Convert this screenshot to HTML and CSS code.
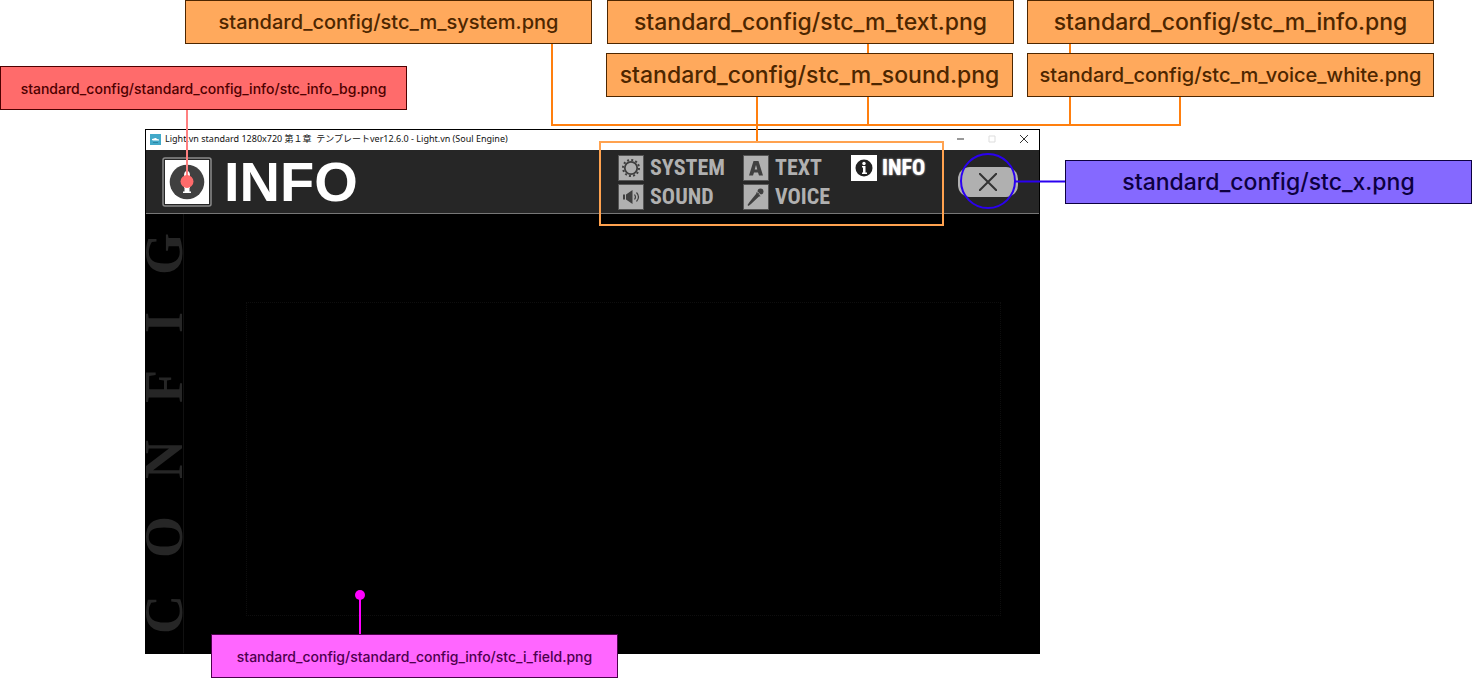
FILE: index.html
```html
<!DOCTYPE html>
<html lang="ja">
<head>
<meta charset="utf-8">
<title>standard_config – INFO</title>
<link rel="stylesheet" href="styles.css">
</head>
<body>
<main class="diagram">
  <section class="window" aria-label="Light.vn">
    <div class="titlebar">
      <svg class="app-icon" viewBox="0 0 11 11" aria-hidden="true"><rect width="11" height="11" fill="#42a9c9"/><path d="M2 6V5l2-.5L5 4h1l1 1 2 .5v1H3z" fill="#fff"/><path d="M3 8.500h5" stroke="#2b86a5"/></svg>
      <span class="caption">Light.vn standard 1280x720 第１章&nbsp; テンプレートver12.6.0 - Light.vn (Soul Engine)</span>
      <div class="controls">
        <button class="control" aria-label="Minimize"><svg viewBox="0 0 8 8"><path d="M1 4h7" stroke="#777" stroke-width="1.5"/></svg></button>
        <button class="control" aria-label="Maximize"><svg viewBox="0 0 8 8"><path d="M1 1h6v6H1z" fill="none" stroke="#ddd"/></svg></button>
        <button class="control" aria-label="Close window"><svg viewBox="0 0 8 8"><path d="m0 0 8 8M8 0 0 8" stroke="#333"/></svg></button>
      </div>
    </div>
    <header class="header">
      <svg class="info-mark" viewBox="0 0 50 50" aria-hidden="true"><rect x="1" y="1" width="48" height="48" rx="2" fill="#262626" stroke="#8a8a8a" stroke-width="1.5"/><rect x="3" y="3" width="44" height="44" fill="#fff"/><circle cx="25" cy="25" r="17.300" fill="#404040"/><path d="M25 14q3 0 3 5v12h-6V19q0-5 3-5z" fill="#fff"/><path d="M22.500 30h5v4.500H29V36h-8v-1.500h1.500z" fill="#fff"/></svg>
      <h1 class="heading">INFO</h1>
      <nav class="menu">
        <button class="item"><svg class="icon" viewBox="0 0 26 26"><rect x=".5" y=".5" width="25" height="25" fill="#b0b0b0" stroke="#555"/><circle cx="13" cy="13" r="6.200" fill="none" stroke="#404040" stroke-width="1.800"/><circle cx="13" cy="13" r="8" fill="none" stroke="#404040" stroke-width="2" stroke-dasharray="2 2.189"/></svg>SYSTEM</button>
        <button class="item"><svg class="icon" viewBox="0 0 26 26"><rect x=".5" y=".5" width="25" height="25" fill="#b0b0b0" stroke="#555"/><path d="M6 20.500 10.500 6h5L20 20.500h-4l-1-3h-4l-1 3zm5.700-6h2.600L13 10z" fill="#404040" fill-rule="evenodd"/></svg>TEXT</button>
        <button class="item current" aria-current="page"><svg class="icon" viewBox="0 0 26 26"><rect width="26" height="26" fill="#fff"/><circle cx="13" cy="13" r="8.500" fill="#222"/><circle cx="13" cy="8.500" r="1.700" fill="#fff"/><path d="M11 11h3.500v6.500H16V19h-5v-1.500h1v-5h-1z" fill="#fff"/></svg>INFO</button>
        <button class="item"><svg class="icon" viewBox="0 0 26 26"><rect x=".5" y=".5" width="25" height="25" fill="#b0b0b0" stroke="#555"/><path d="M5 10.500h2v5H5zm3 0L14.500 6v14L8 15.500z" fill="#404040"/><path d="M16.500 10.500q2 2.500 0 5m2-7q4 4.500 0 9" fill="none" stroke="#404040" stroke-width="1.200"/></svg>SOUND</button>
        <button class="item"><svg class="icon" viewBox="0 0 26 26"><rect x=".5" y=".5" width="25" height="25" fill="#b0b0b0" stroke="#555"/><circle cx="17.500" cy="7.500" r="3" fill="#404040"/><path d="m13.500 8 4.200 4.200-1.700.3L8 20l-2.500 2-1-1L6.500 18l6.700-8.300z" fill="#404040"/><path d="m14.500 7.500 3.500 3.500" stroke="#b0b0b0" stroke-width=".6"/></svg>VOICE</button>
      </nav>
      <button class="close" aria-label="Close"><svg viewBox="0 0 18 18"><path d="m0 0 18 18M18 0 0 18" stroke="#333" stroke-width="2"/></svg></button>
    </header>
    <div class="body">
      <div class="rail"><span>C</span><span>O</span><span>N</span><span>F</span><span>I</span><span>G</span></div>
      <div class="field"></div>
    </div>
  </section>

  <svg class="links" viewBox="0 0 1472 678" aria-hidden="true">
    <g fill="none" stroke="#ff7f0e" stroke-width="2"><path d="M552 43v82h628V96M868 43v82M1070 43v82M757 96v46"/><path d="M600 142h343v83H600z" stroke="#ffa24f"/></g>
    <path d="M187 109v72" stroke="#ff8080" stroke-width="2"/><circle cx="187" cy="181.500" r="6.500" fill="#ff6b6b"/>
    <path d="M360 595v40" stroke="#f0f" stroke-width="2"/><circle cx="360" cy="595" r="5" fill="#f0f"/>
    <g fill="none" stroke="#2a00f0" stroke-width="2"><circle cx="988" cy="181" r="27"/><path d="M1015 181.500h51"/></g>
  </svg>

  <div class="label orange medium system">standard_config/stc_m_system.png</div>
  <div class="label orange text">standard_config/stc_m_text.png</div>
  <div class="label orange info">standard_config/stc_m_info.png</div>
  <div class="label orange sound">standard_config/stc_m_sound.png</div>
  <div class="label orange medium voice">standard_config/stc_m_voice_white.png</div>
  <div class="label red small">standard_config/standard_config_info/stc_info_bg.png</div>
  <div class="label blue">standard_config/stc_x.png</div>
  <div class="label pink small">standard_config/standard_config_info/stc_i_field.png</div>
</main>
</body>
</html>
```
FILE: styles.css
```css
* { box-sizing: border-box; }
body { margin: 0; background: #fff; font-family: Inter, "Noto Sans CJK JP", sans-serif; }
button { margin: 0; padding: 0; border: 0; background: none; font: inherit; color: inherit; }
.diagram { position: relative; min-height: 678px; }

.window { position: absolute; left: 145px; top: 129px; width: 895px; min-height: 525px; display: flex; flex-direction: column; background: #000; border: 1px solid #000; }
.titlebar { display: flex; align-items: center; gap: 4px; height: 20px; padding: 0 11px 2px 4px; background: #fff; }
.app-icon { width: 11px; height: 11px; }
.caption { font: 9px/18px "Noto Sans", "Noto Sans CJK JP", sans-serif; color: #111; white-space: nowrap; }
.controls { display: flex; gap: 24px; margin-left: auto; }
.control { display: flex; width: 8px; height: 8px; }
.control svg { width: 8px; height: 8px; }

.header { display: flex; align-items: center; height: 64px; padding: 0 21px 0 16px; background: #262626; border-bottom: 1px solid #777; }
.info-mark { width: 50px; height: 50px; }
.heading { margin: 0 0 0 12px; font: bold 56px/64px "Liberation Sans", sans-serif; color: #fff; }
.menu { display: grid; grid-template-columns: 125px 108px 80px; row-gap: 3px; margin-left: auto; padding-top: 1px; }
.item { display: flex; align-items: center; gap: 6px; font: bold 22px/26px "Roboto Condensed", Roboto, sans-serif; color: #b0b0b0; }
.icon { flex: none; width: 26px; height: 26px; }
.current { gap: 5px; color: #fff; text-shadow: 0 0 2px #fff; }
.close { display: flex; align-items: center; justify-content: center; width: 60px; height: 30px; margin-left: 27px; border-radius: 12px; background: #b0b0b0; }
.close svg { width: 18px; height: 18px; }

.body { display: flex; flex: 1; }
.rail { display: flex; justify-content: space-around; width: 38px; writing-mode: vertical-rl; transform: rotate(180deg); border-left: 1px solid #111; font: bold 54px/37px "Liberation Serif", serif; color: #262626; }
.field { flex: 1; margin: 88px 38px 37px 62px; border: 1px dotted #0e0e0e; }

.links { position: absolute; left: 0; top: 0; width: 1472px; height: 678px; pointer-events: none; }

.label { position: absolute; width: 407px; height: 44px; border: 1px solid; font-size: 23px; font-weight: 500; line-height: 43px; text-align: center; white-space: nowrap; }
.medium { font-size: 20px; }
.small { font-size: 14px; }
.orange { background: #ffa95c; color: #4d2600; }
.red { left: 0; top: 66px; background: #ff6b6b; color: #4d0000; }
.blue { left: 1065px; top: 160px; background: #8569ff; color: #0d0040; }
.pink { left: 211px; top: 634px; background: #ff66ff; color: #4d004d; }
.system { left: 185px; top: 0; }
.text { left: 607px; top: 0; }
.info { left: 1027px; top: 0; }
.sound { left: 606px; top: 53px; }
.voice { left: 1027px; top: 53px; }
```
